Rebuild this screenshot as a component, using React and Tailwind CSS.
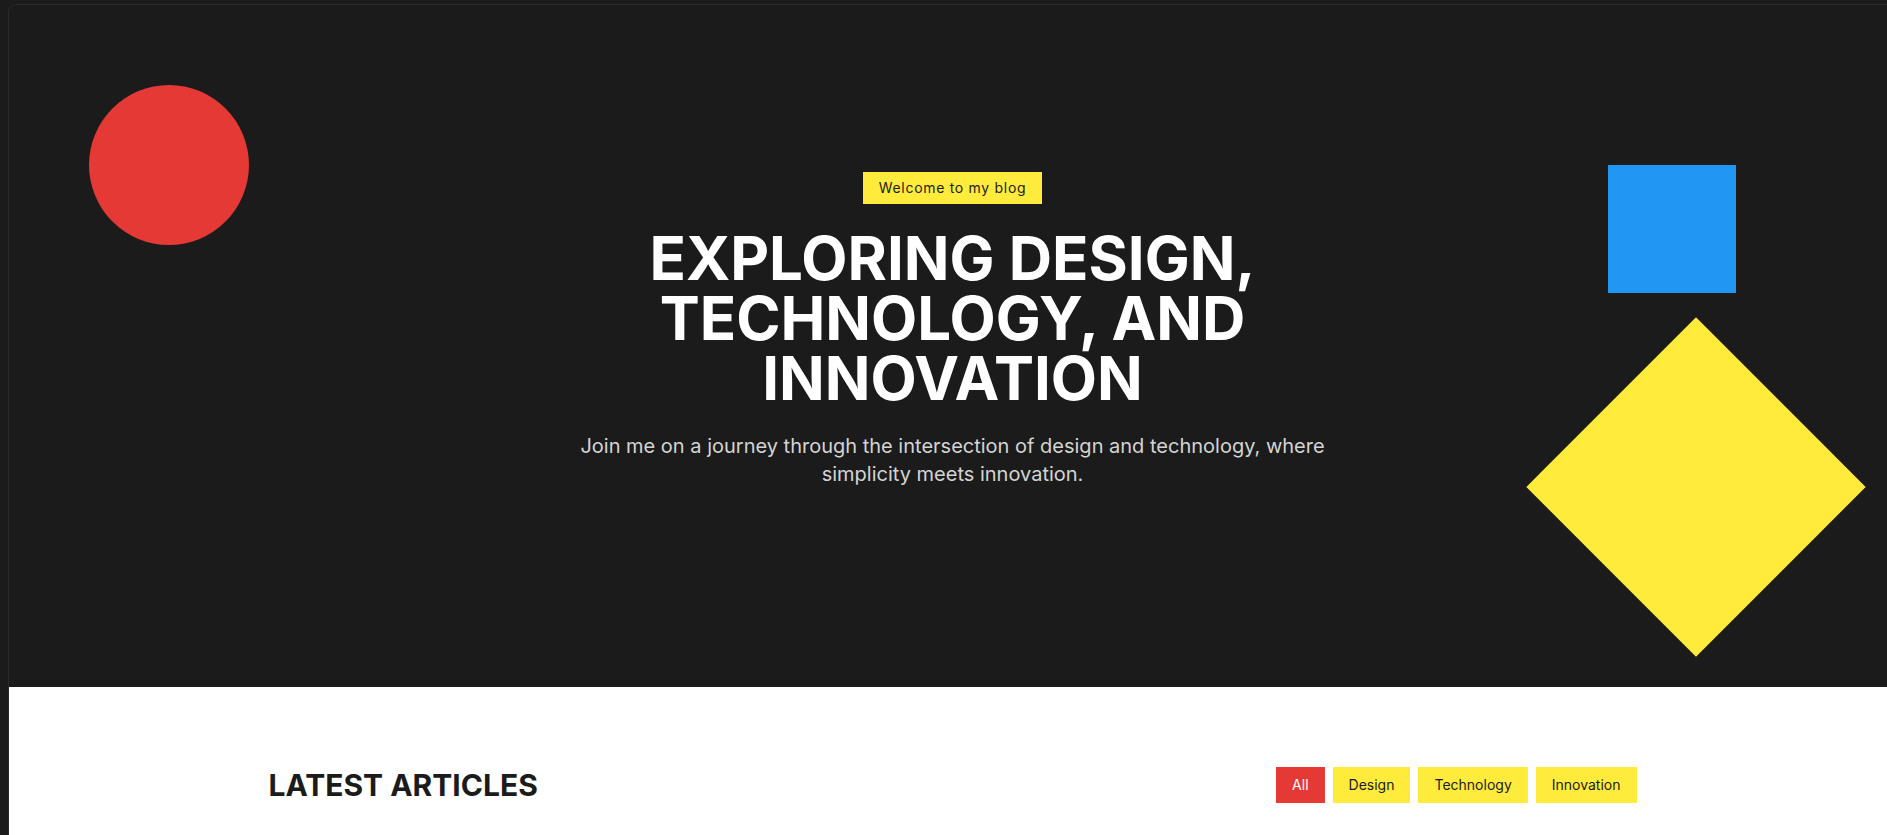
import React, { useState } from 'react';

const FILTERS = ['All', 'Design', 'Technology', 'Innovation'];

export default function App() {
  const [active, setActive] = useState('All');

  return (
    <div
      className="h-[835px] w-full overflow-hidden bg-[#1b1b1b] pl-2 pt-1"
      style={{ fontFamily: 'Inter, "Noto Sans", sans-serif' }}
    >
      <div className="w-[1888px] overflow-hidden rounded-tl-lg border-l border-t border-[#2a2a2a]">
        {/* Hero */}
        <section className="relative h-[682px] overflow-hidden bg-[#1b1b1b]">
          {/* decorative shapes */}
          <div className="absolute left-20 top-20 h-40 w-40 rounded-full bg-[#e53935]" />
          <div className="absolute right-40 top-40 h-32 w-32 bg-[#2196f3]" />
          <div className="absolute bottom-20 right-20 h-60 w-60 rotate-45 bg-[#ffeb3b]" />

          <div className="relative mx-auto flex max-w-4xl flex-col items-center pt-[167px] text-center">
            <span className="mb-6 bg-[#ffeb3b] px-4 py-1.5 text-sm tracking-wider text-[#1b1b1b]">
              Welcome to my blog
            </span>
            <h1 className="mb-6 max-w-[700px] text-6xl font-bold leading-none text-white">
              EXPLORING DESIGN, TECHNOLOGY, AND INNOVATION
            </h1>
            <p className="max-w-3xl text-xl leading-7 text-[#d4d4d4]">
              Join me on a journey through the intersection of design and technology, where simplicity meets innovation.
            </p>
          </div>
        </section>

        {/* Articles */}
        <section className="h-[200px] bg-white pt-20">
          <div className="mx-auto flex max-w-[1400px] items-center justify-between px-4">
            <h2 className="text-3xl font-bold text-[#1b1b1b]">LATEST ARTICLES</h2>
            <div className="flex gap-2">
              {FILTERS.map((f) => (
                <button
                  key={f}
                  onClick={() => setActive(f)}
                  className={`px-4 py-2 text-sm ${
                    active === f ? 'bg-[#e53935] text-white' : 'bg-[#ffeb3b] text-[#1b1b1b]'
                  }`}
                >
                  {f}
                </button>
              ))}
            </div>
          </div>
        </section>
      </div>
    </div>
  );
}
